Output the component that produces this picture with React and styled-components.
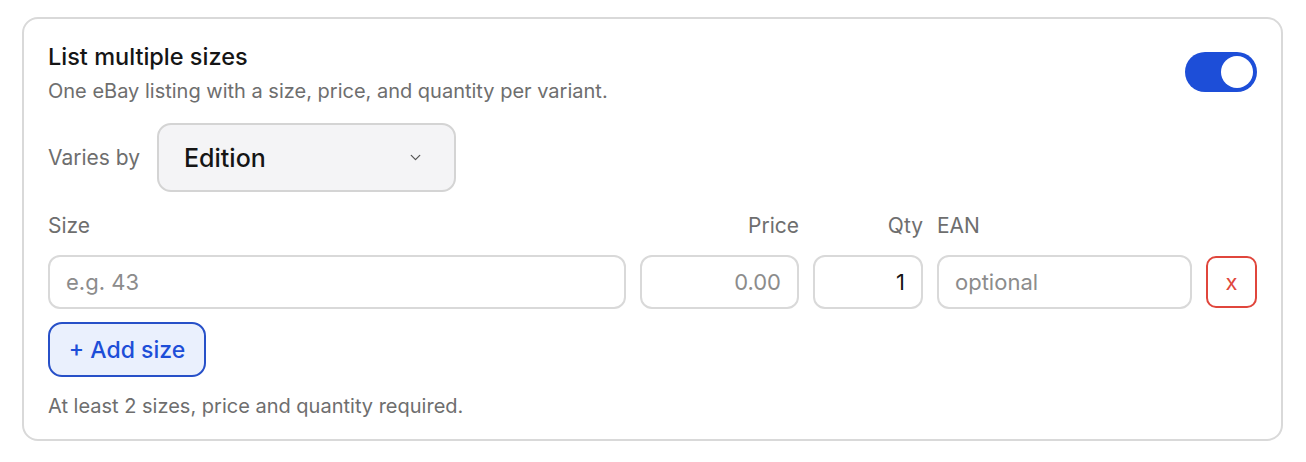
import styled, { createGlobalStyle } from "styled-components";

const GlobalStyle = createGlobalStyle`
    body {
        margin: 0;
        background: #ffffff;
        font-family: Inter, "Noto Sans", sans-serif;
    }
`;

const Page = styled.div`
    padding: 17px 23px 20px 22px;
`;

const Card = styled.section`
    border: 2px solid #d9d9d9;
    border-radius: 16px;
    padding: 24px 24px 21px 24px;
    display: flex;
    flex-direction: column;
`;

const Header = styled.div`
    display: flex;
    align-items: flex-start;
    justify-content: space-between;
`;

const Title = styled.h2`
    margin: 0;
    font-size: 23.5px;
    font-weight: 500;
    color: #151515;
    line-height: 28px;
`;

const Subtitle = styled.p`
    margin: 6px 0 0;
    font-size: 20px;
    color: #6e6e6e;
    line-height: 28px;
`;

const Toggle = styled.div`
    width: 72px;
    height: 40px;
    margin-top: 9px;
    border-radius: 20px;
    background: #1d4ed8;
    display: flex;
    align-items: center;
    justify-content: flex-end;
    padding: 4px;
    box-sizing: border-box;
`;

const Knob = styled.div`
    width: 32px;
    height: 32px;
    border-radius: 50%;
    background: #ffffff;
`;

const VariesRow = styled.div`
    display: flex;
    align-items: center;
    gap: 17px;
    margin-top: 18px;
`;

const MutedLabel = styled.span`
    font-size: 21px;
    color: #6e6e6e;
`;

const Select = styled.div`
    width: 299px;
    height: 69px;
    box-sizing: border-box;
    border: 2px solid #d4d4d4;
    border-radius: 14px;
    background: #f4f4f6;
    display: flex;
    align-items: center;
    justify-content: space-between;
    padding: 0 30px 0 25px;
    font-size: 25px;
    font-weight: 500;
    color: #151515;
`;

const Grid = styled.div`
    display: grid;
    grid-template-columns: 1fr 159px 110px 255px 51px;
    column-gap: 14px;
    align-items: center;
`;

const LabelRow = styled(Grid)`
    margin-top: 22px;
    margin-bottom: 17px;
`;

const ColLabel = styled.span`
    font-size: 21px;
    color: #6e6e6e;
    text-align: ${(p) => (p.$right ? "right" : "left")};
    line-height: 24px;
`;

const Input = styled.input`
    box-sizing: border-box;
    width: 100%;
    height: 54px;
    border: 2px solid #d9d9d9;
    border-radius: 12px;
    padding: 0 16px;
    font-family: inherit;
    font-size: 22px;
    color: #151515;
    background: #ffffff;
    text-align: ${(p) => (p.$right ? "right" : "left")};
    outline: none;

    &::placeholder {
        color: #8c8c8c;
    }
`;

const RemoveButton = styled.button`
    box-sizing: border-box;
    width: 51px;
    height: 52px;
    border: 2px solid #e0463c;
    border-radius: 10px;
    background: #ffffff;
    color: #e0463c;
    font-family: inherit;
    font-size: 22px;
    cursor: pointer;
    padding: 0;
`;

const AddButton = styled.button`
    align-self: flex-start;
    box-sizing: border-box;
    width: 158px;
    height: 55px;
    margin-top: 13px;
    border: 2px solid #2750c8;
    border-radius: 14px;
    background: #eaf0fd;
    color: #1d4ed8;
    font-family: inherit;
    font-size: 23px;
    font-weight: 500;
    cursor: pointer;
    padding: 0;
`;

const Hint = styled.p`
    margin: 17px 0 0;
    font-size: 20px;
    color: #6e6e6e;
    line-height: 24px;
`;

function Chevron() {
    return (
        <svg width="17" height="17" viewBox="0 0 24 24" fill="none" stroke="#555" strokeWidth="1.8" strokeLinecap="round" strokeLinejoin="round">
            <path d="M6 9l6 6 6-6" />
        </svg>
    );
}

export default function App() {
    return (
        <Page>
            <GlobalStyle />
            <Card>
                <Header>
                    <div>
                        <Title>List multiple sizes</Title>
                        <Subtitle>One eBay listing with a size, price, and quantity per variant.</Subtitle>
                    </div>
                    <Toggle>
                        <Knob />
                    </Toggle>
                </Header>

                <VariesRow>
                    <MutedLabel>Varies by</MutedLabel>
                    <Select>
                        Edition
                        <Chevron />
                    </Select>
                </VariesRow>

                <LabelRow>
                    <ColLabel>Size</ColLabel>
                    <ColLabel $right>Price</ColLabel>
                    <ColLabel $right>Qty</ColLabel>
                    <ColLabel>EAN</ColLabel>
                    <span />
                </LabelRow>

                <Grid>
                    <Input placeholder="e.g. 43" />
                    <Input $right placeholder="0.00" />
                    <Input $right defaultValue="1" />
                    <Input placeholder="optional" />
                    <RemoveButton>x</RemoveButton>
                </Grid>

                <AddButton>+ Add size</AddButton>

                <Hint>At least 2 sizes, price and quantity required.</Hint>
            </Card>
        </Page>
    );
}
